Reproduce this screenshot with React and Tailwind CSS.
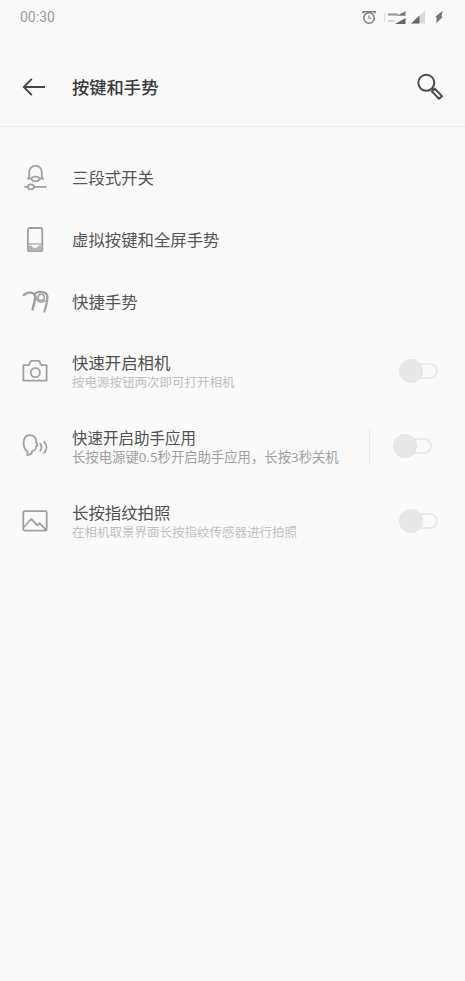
const AlarmIcon = () => (
  <svg className="h-4 w-4" viewBox="0 0 16 16" fill="none" stroke="#7c7c7c" strokeWidth="1.5">
    <circle cx="8" cy="9" r="5.2" />
    <path d="M2 4.6V2.8h3.4M14 4.6V2.8h-3.4M5 2.8h6" />
    <path d="M8 6.2v3h2.2" strokeWidth="1.1" />
  </svg>
)

const DualSignalIcon = () => (
  <svg className="h-4 w-6" viewBox="0 0 24 16">
    <path d="M22.5 2v4.8H14z" fill="#777777" />
    <path d="M22.5 9v6H12z" fill="#666666" />
    <path d="M5 4.4h10v2.2H5z" fill="#9c9c9c" />
    <path d="M5 11.2h6.5v1.6H5z" fill="#d0d0d0" />
    <path d="M1.6 4v9" stroke="#e2e2e2" strokeWidth="1.4" />
  </svg>
)

const SignalIcon = () => (
  <svg className="h-4 w-4" viewBox="0 0 16 16">
    <path d="M15 1.5v13H1z" fill="#d8d8d8" />
    <path d="M9.5 6.5v8H1z" fill="#666666" />
  </svg>
)

const ChargeIcon = () => (
  <svg className="h-4 w-3" viewBox="0 0 12 16">
    <path d="M9.8 1.8 2.6 7.6l1.2 1.8L3 14.4l6.4-6.2-.8-1.6z" fill="#777777" />
  </svg>
)

const BackIcon = () => (
  <svg className="h-6 w-6" viewBox="0 0 24 24" fill="none" stroke="#444444" strokeWidth="1.9">
    <path d="M23 12H1.8M9.8 3.8 1.8 12l8 8.2" />
  </svg>
)

const SearchIcon = () => (
  <svg className="h-7 w-7" viewBox="0 0 28 28" fill="none" stroke="#4c4c4c" strokeWidth="2">
    <circle cx="10.3" cy="9.8" r="8" />
    <path d="m16 15.4 2 2" />
    <path d="m18.8 15.6 7.2 7.6-3 2.6-7.2-7.4z" strokeLinejoin="round" />
  </svg>
)

const iconProps = {
  className: 'h-7 w-7 shrink-0',
  viewBox: '0 0 28 28',
  fill: 'none',
  stroke: '#a0a0a0',
  strokeWidth: 1.8,
  strokeLinejoin: 'round',
}

const SliderIcon = () => (
  <svg {...iconProps}>
    <path d="M6 14.6h5M18 14.6h5M8.2 14.4V8a6.3 6.3 0 0 1 12.6 0v6.4" />
    <path d="M10.4 14.6c.8-2.6 7.4-2.6 8.2 0-.8 3.6-7.4 3.6-8.2 0z" />
    <path d="M3.2 22.8h3.6M13 22.8h12.6" />
    <ellipse cx="9.9" cy="22.8" rx="3.1" ry="2.5" />
  </svg>
)

const PhoneIcon = () => (
  <svg {...iconProps}>
    <rect x="6.9" y="2" width="14.4" height="23.2" rx="1.8" />
    <path d="M7 18h14.2" strokeWidth="1.2" />
    <path d="M8 20h2.5l1.5 2.2h4l1.5-2.2h2.7v4.4H8z" fill="#b4b4b4" stroke="#b4b4b4" strokeWidth="0.8" />
  </svg>
)

const GestureIcon = () => (
  <svg {...iconProps} strokeLinecap="round">
    <path
      d="M2.8 7C5.4 4.8 8.2 4.2 10.8 4.8c2.4.6 3.6 2 3.4 4.4-.4 4-1.4 8-2.6 12.2"
      strokeWidth="2.4"
    />
    <path d="M13.4 6.6c1-1.8 3.6-2.8 6.6-2.8 4.4 0 6.6 2.2 6.4 6-.2 4.8-1.6 9-3 13.8" strokeWidth="2.2" />
    <circle cx="20.2" cy="9.4" r="3.2" strokeWidth="1.6" />
    <path d="M14.6 8.4c.4 3.2 2.6 6 5.6 6 1.6 0 2.8-.6 4-1.6" strokeWidth="1.4" />
  </svg>
)

const CameraIcon = () => (
  <svg {...iconProps}>
    <path d="M2.4 8.2h5.2l2.6-4.4h7.6l2.6 4.4h5.2v15.4H2.4z" />
    <circle cx="14.4" cy="15.6" r="4.6" />
  </svg>
)

const AssistantIcon = () => (
  <svg {...iconProps}>
    <path d="M6.4 23v-3.4C3.6 17.8 2.6 15 2.6 10.8c0-5 2.4-7.6 6.2-7.6 4.4 0 6.6 2.8 6.4 7l1.2 3.4-1.4.8c.2 3.2-.8 4.2-3.8 4.4 0 2.6-1.6 4.2-4.8 4.2z" />
    <path d="M19.2 11.6c1.6 2.2 1.6 5 0 7.2M23.2 9.6c3 3.4 3 8 0 11.4" strokeLinecap="round" />
  </svg>
)

const PictureIcon = () => (
  <svg {...iconProps}>
    <rect x="2.3" y="4.2" width="23.4" height="19.4" rx="1.4" />
    <path d="m3 20 7.2-8 6.2 6.4 2-2.2 6.8 6.8" />
  </svg>
)

const settingsItems = [
  { name: '三段式开关', icon: SliderIcon },
  { name: '虚拟按键和全屏手势', icon: PhoneIcon },
  { name: '快捷手势', icon: GestureIcon },
]

const toggleItems = [
  {
    name: '快速开启相机',
    description: '按电源按钮两次即可打开相机',
    icon: CameraIcon,
  },
  {
    name: '快速开启助手应用',
    description: '长按电源键0.5秒开启助手应用，长按3秒关机',
    icon: AssistantIcon,
    divided: true,
  },
  {
    name: '长按指纹拍照',
    description: '在相机取景界面长按指纹传感器进行拍照',
    icon: PictureIcon,
  },
]

const Toggle = () => (
  <button type="button" role="switch" aria-checked="false" className="flex h-6 w-10 items-center">
    <span className="z-10 h-6 w-6 shrink-0 rounded-full border border-[#e4e4e4] bg-[#e8e8e8]" />
    <span className="-ml-4 h-4 w-[31px] shrink-0 rounded-full border-2 border-[#e9e9e9]" />
  </button>
)

const App = () => {
  return (
    <div className="min-h-screen bg-[#fafafa] font-['Noto_Sans','Noto_Sans_CJK_SC',sans-serif]">
      <div className="flex h-[34px] items-center pr-5 pl-5">
        <span className="flex-1 font-['Roboto',sans-serif] text-[14px] text-[#9a9a9a]">00:30</span>
        <div className="flex items-center">
          <AlarmIcon />
          <div className="ml-1.5 flex items-center gap-[3px]">
            <DualSignalIcon />
            <SignalIcon />
          </div>
          <div className="ml-[7px]">
            <ChargeIcon />
          </div>
        </div>
      </div>

      <header className="flex h-[93px] items-center border-b border-[#ededed] pt-[14px] pr-[21px] pl-[22px]">
        <BackIcon />
        <h1 className="ml-[26px] flex-1 pt-px text-[17.3px] font-medium text-[#3a3a3a]">按键和手势</h1>
        <SearchIcon />
      </header>

      <main className="pt-5">
        {settingsItems.map((item) => (
          <div key={item.name} className="flex h-[62px] items-center pl-[21px]">
            <item.icon />
            <p className="ml-[23px] text-[16.4px] text-[#555555]">{item.name}</p>
          </div>
        ))}
        {toggleItems.map((item) => (
          <div key={item.name} className="flex h-[75px] items-center pl-[21px]">
            <item.icon />
            <div className="ml-[23px] flex-1 pt-[3px] whitespace-nowrap">
              <p className={`leading-5 text-[#505050] ${item.divided ? 'text-[15.5px]' : 'text-[16.4px]'}`}>
                {item.name}
              </p>
              <p
                className={`leading-[19px] ${
                  item.divided ? 'text-[13.35px] text-[#a0a0a0]' : 'text-[12.5px] text-[#c0c0c0]'
                }`}
              >
                {item.description}
              </p>
            </div>
            {item.divided ? (
              <div className="flex items-center pr-8">
                <span className="mr-[23px] h-9 w-px bg-[#ebebeb]" />
                <Toggle />
              </div>
            ) : (
              <div className="pr-[26px]">
                <Toggle />
              </div>
            )}
          </div>
        ))}
      </main>
    </div>
  )
}

export default App
